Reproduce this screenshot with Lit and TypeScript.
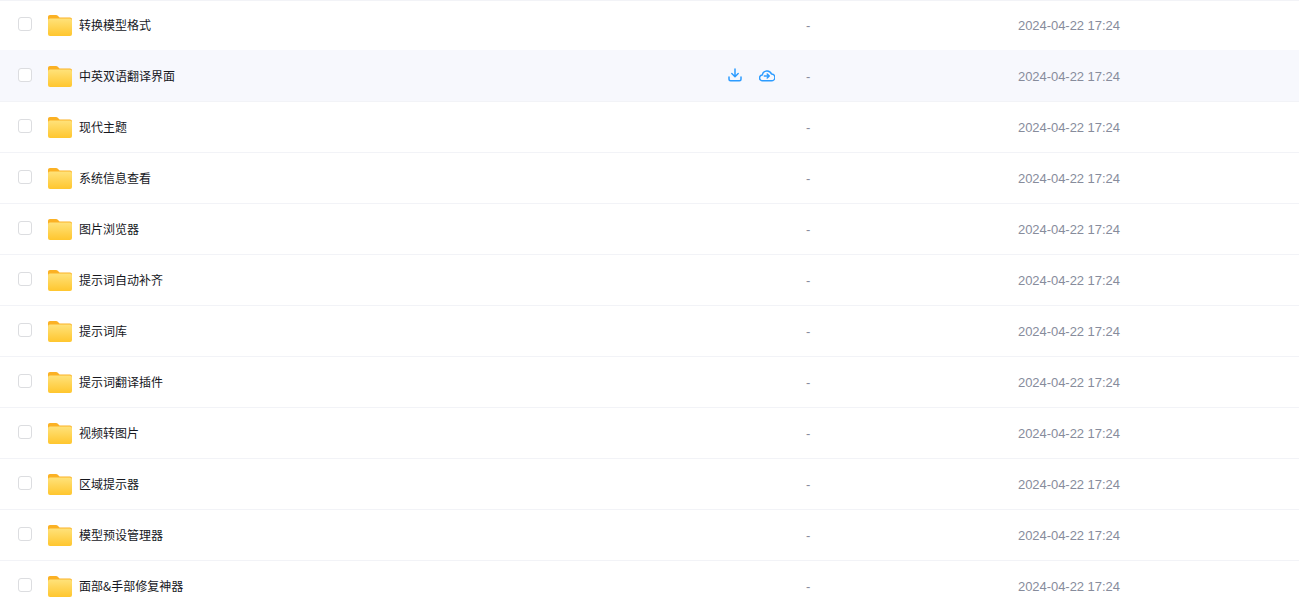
import { LitElement, html, css, svg } from 'lit';
import { customElement } from 'lit/decorators.js';
import { classMap } from 'lit/directives/class-map.js';

const NAMES = [
  '转换模型格式',
  '中英双语翻译界面',
  '现代主题',
  '系统信息查看',
  '图片浏览器',
  '提示词自动补齐',
  '提示词库',
  '提示词翻译插件',
  '视频转图片',
  '区域提示器',
  '模型预设管理器',
  '面部&手部修复神器',
];

const folderIcon = svg`
  <svg class="folder" viewBox="0 0 24 21" width="24" height="21">
    <defs>
      <linearGradient id="fold" x1="0" y1="0" x2="0" y2="1">
        <stop offset="0" stop-color="#ffe27a" />
        <stop offset="1" stop-color="#ffc62e" />
      </linearGradient>
    </defs>
    <path fill="#fbb124" d="M0 2C0 .8.8 0 2 0h6c.8 0 1.300.3 1.800.8L11.500 2.500H22c1.200 0 2 .8 2 2V8H0z" />
    <rect x="0" y="3.500" width="24" height="17.500" rx="2" fill="url(#fold)" />
  </svg>`;

const downloadIcon = svg`
  <svg viewBox="0 0 14 14" width="14" height="14" fill="none" stroke="#2d9cff" stroke-width="1.500" stroke-linecap="round" stroke-linejoin="round">
    <path d="M7 1v7.500M3.800 5.500 7 8.700l3.200-3.200" />
    <path d="M1 9v2.300c0 .9.600 1.500 1.500 1.500h9c.9 0 1.500-.6 1.500-1.500V9" />
  </svg>`;

const cloudIcon = svg`
  <svg viewBox="0 0 16 13" width="16" height="13" fill="none" stroke="#2d9cff" stroke-width="1.500" stroke-linecap="round" stroke-linejoin="round">
    <path d="M4 11.800H3.600A2.900 2.900 0 0 1 3.300 6 4.800 4.800 0 0 1 12.500 5a3.400 3.400 0 0 1 0 6.800z" />
    <path d="M5.300 7h5M8.200 5l2.100 2-2.100 2" />
  </svg>`;

@customElement('app-root')
export class AppRoot extends LitElement {
  static styles = css`
    :host {
      display: block;
      height: 611px;
      overflow: hidden;
      background: #fff;
      font-family: "Noto Sans CJK SC", "Liberation Sans", sans-serif;
    }

    .list {
      margin-top: -1px;
    }

    .row {
      display: grid;
      grid-template-columns: 47px 32px 727px 212px 1fr;
      align-items: center;
      height: 50px;
      border-top: 1px solid #f2f3f7;
    }

    .row:first-child {
      box-shadow: inset 0 1px 0 #f2f3f7;
    }

    .row.active {
      background: #f7f8fd;
      border-top-color: #f7f8fd;
    }

    .check {
      box-sizing: border-box;
      width: 14px;
      height: 14px;
      margin-left: 18px;
      margin-top: -2px;
      border: 1px solid #dcdde0;
      border-radius: 3px;
      background: #fff;
    }

    .folder {
      display: block;
      margin: 1px 0 0 1px;
    }

    .name {
      display: flex;
      align-items: center;
      justify-content: space-between;
      padding-bottom: 2px;
      font-size: 12px;
      color: #16171d;
    }

    .actions {
      display: flex;
      align-items: center;
      gap: 17px;
      margin-right: 31px;
    }

    .actions svg {
      display: block;
    }

    .size,
    .time {
      font-family: "Liberation Sans", sans-serif;
      font-size: 13px;
      color: #878c9c;
    }

    .time {
      letter-spacing: -0.05px;
    }
  `;

  render() {
    return html`
      <div class="list">
        ${NAMES.map((name, i) => {
          const active = i === 1;
          return html`
            <div class=${classMap({ row: true, active })}>
              <div class="check"></div>
              ${folderIcon}
              <div class="name">
                <span>${name}</span>
                ${active ? html`<div class="actions">${downloadIcon}${cloudIcon}</div>` : ''}
              </div>
              <div class="size">-</div>
              <div class="time">2024-04-22 17:24</div>
            </div>
          `;
        })}
      </div>
    `;
  }
}
